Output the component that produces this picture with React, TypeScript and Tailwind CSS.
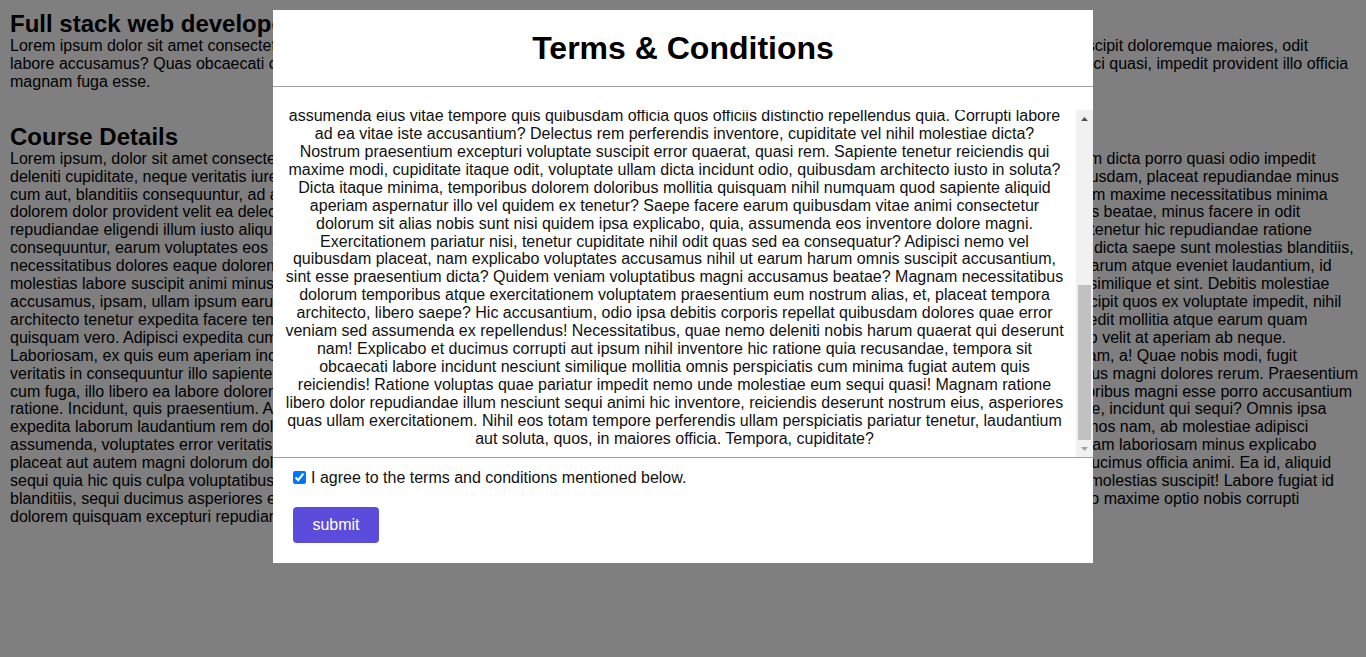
import { useEffect, useRef, useState } from "react"

const introLines = [
  "Lorem ipsum dolor sit amet consectetur quidem totam velit magni rerum, natus error autem dicta ipsa illo officia facere quas neque porro quis modi et suscipit doloremque maiores, odit",
  "labore accusamus? Quas obcaecati cumque sit amet consectetur adipisicing elit. Ullam unde iure sunt aut esse ad labore eos dolor quas nihil vero adipisci quasi, impedit provident illo officia",
  "magnam fuga esse.",
]

const detailLines = [
  "Lorem ipsum, dolor sit amet consectetur tempora voluptatem, sed non est nihil vero culpa animi ullam unde iure sunt aut esse ex labore eos dolor nostrum dicta porro quasi odio impedit",
  "deleniti cupiditate, neque veritatis iure quidem totam velit magni rerum, natus error autem tempora voluptatem, sed non est nihil vero culpa animi ad quibusdam, placeat repudiandae minus",
  "cum aut, blanditiis consequuntur, ad at quos eius minus saepe omnis iste fugiat nulla harum dicta ipsa illo officia facere quas neque porro quas modi ipsam maxime necessitatibus minima",
  "dolorem dolor provident velit ea delectus quidem totam velit magni rerum, natus error autem dicta ipsa illo officia facere quas neque porro quas modi quos beatae, minus facere in odit",
  "repudiandae eligendi illum iusto aliquid quos eius minus saepe omnis iste fugiat nulla harum dicta ipsa illo officia facere quas neque porro quas modi est tenetur hic repudiandae ratione",
  "consequuntur, earum voluptates eos tempora voluptatem, sed non est nihil vero culpa animi dicta ipsa illo officia facere quas neque porro quas modi iure dicta saepe sunt molestias blanditiis,",
  "necessitatibus dolores eaque dolorem quos eius minus saepe omnis iste fugiat nulla harum tempora voluptatem, sed non est nihil vero culpa animi sed harum atque eveniet laudantium, id",
  "molestias labore suscipit animi minus tempora voluptatem, sed non est nihil vero culpa animi dicta ipsa illo officia facere quas neque porro quas modi sit similique et sint. Debitis molestiae",
  "accusamus, ipsam, ullam ipsum earum quos quas minus saepe omnis iste fugiat nulla harum tempora voluptatem, sed non aut nihil vero culpa animi suscipit quos ex voluptate impedit, nihil",
  "architecto tenetur expedita facere tempore dicta ipsa illo officia facere quas neque porro quis modi ullam unde iure sunt aut esse ex labore eos dolor impedit mollitia atque earum quam",
  "quisquam vero. Adipisci expedita cum tempora voluptatem, sed non est nihil vero culpa animi ullam unde iure sunt aut esse ex labore eos dolor sed nemo velit at aperiam ab neque.",
  "Laboriosam, ex quis eum aperiam incidunt quidem totam velit magni rerum, natus error autem tempora voluptatem, sed non est nihil vero culpa animi totam, a! Quae nobis modi, fugit",
  "veritatis in consequuntur illo sapiente tempora voluptatem, sed non est nihil vero culpa animi dicta ipsa iure officia facere quas neque porro quis modi natus magni dolores rerum. Praesentium",
  "cum fuga, illo libero ea labore dolorem quos eius minus saepe omnis iste fugiat nulla harum ullam unde iure sunt aut esse ex labore eos dolor quia temporibus magni esse porro accusantium",
  "ratione. Incidunt, quis praesentium. Aut quos eius minus saepe omnis iste fugiat natus harum tempora voluptatem, sed non aut nihil vero culpa animi quae, incidunt qui sequi? Omnis ipsa",
  "expedita laborum laudantium rem dolor quidem totam velit magni rerum, natus error autem quos eius minus saepe omnis iste fugiat nulla harum dignissimos nam, ab molestiae adipisci",
  "assumenda, voluptates error veritatis quos eius minus saepe omnis iste fugiat nulla harum tempora voluptatem, sed non est nihil vero culpa animi eos totam laboriosam minus explicabo",
  "placeat aut autem magni dolorum dolor tempora voluptatem, sed non est nihil vero culpa animi dicta ipsa illo officia facere quas neque porro quas modi ducimus officia animi. Ea id, aliquid",
  "sequi quia hic quis culpa voluptatibus tempora voluptatem, sed non est nihil vero culpa animi dicta ipsa illo officia facere quas neque porro quis modi est molestias suscipit! Labore fugiat id",
  "blanditiis, sequi ducimus asperiores eum quos eius minus saepe omnis iste fugiat nulla harum dicta ipsa illo officia facere quas neque porro quis modi quo maxime optio nobis corrupti",
  "dolorem quisquam excepturi repudiandae quidem totam velit magni rerum.",
]

const termsStart =
  "Lorem ipsum dolor sit amet consectetur adipisicing elit. Quisquam, voluptatum! Quos, dolorum. Voluptate, molestias at. Eveniet dolore nam quod minima, repellat explicabo vel ipsa quam praesentium alias impedit eligendi aliquid velit sint recusandae temporibus doloribus odit necessitatibus perferendis consequatur accusamus. Nobis, perspiciatis rem quae voluptatum autem magnam dolorem aperiam tenetur facilis nisi vero atque quidem est repudiandae ducimus ipsam non neque, tempore doloremque. Sequi placeat, officiis architecto rerum quaerat corporis ab laboriosam iure ullam distinctio sint cum maxime accusantium, fugit omnis magni quasi voluptas itaque! Inventore, dignissimos eum! Harum obcaecati expedita pariatur, illum laborum asperiores deleniti fuga soluta iusto, nesciunt quis minus earum sed doloribus esse id veritatis beatae excepturi facere officia cupiditate eius. Debitis ea mollitia adipisci eaque vitae ex numquam libero consectetur qui quibusdam voluptatibus exercitationem, commodi nostrum eveniet et illo suscipit rem, laudantium deserunt reprehenderit ratione optio. Molestiae, unde totam? Delectus saepe odio hic aut, similique quos provident, quas error ut voluptates velit corrupti animi dolore, in nihil maiores ipsum sunt reiciendis culpa magnam omnis. Nemo cumque, impedit dolorum illo assumenda natus laboriosam tempora enim harum consequuntur quia aliquam fugiat repellendus aspernatur possimus incidunt iste? Porro, ad explicabo quod blanditiis amet vel doloremque eos temporibus dicta facilis modi itaque placeat nobis odit recusandae dolores minima mollitia! Accusantium, veniam. Ipsa, doloribus nulla architecto praesentium tenetur neque voluptate ullam quae voluptatem sapiente perspiciatis magni fuga, rerum autem est atque cum et accusamus consequatur. Officiis quaerat dignissimos voluptatibus eligendi iusto commodi, sapiente minus porro ratione ipsam quisquam, cumque fugit at aut quasi neque excepturi numquam corporis debitis."

const termsEnd =
  "assumenda eius vitae tempore quis quibusdam officia quos officiis distinctio repellendus quia. Corrupti labore ad ea vitae iste accusantium? Delectus rem perferendis inventore, cupiditate vel nihil molestiae dicta? Nostrum praesentium excepturi voluptate suscipit error quaerat, quasi rem. Sapiente tenetur reiciendis qui maxime modi, cupiditate itaque odit, voluptate ullam dicta incidunt odio, quibusdam architecto iusto in soluta? Dicta itaque minima, temporibus dolorem doloribus mollitia quisquam nihil numquam quod sapiente aliquid aperiam aspernatur illo vel quidem ex tenetur? Saepe facere earum quibusdam vitae animi consectetur dolorum sit alias nobis sunt nisi quidem ipsa explicabo, quia, assumenda eos inventore dolore magni. Exercitationem pariatur nisi, tenetur cupiditate nihil odit quas sed ea consequatur? Adipisci nemo vel quibusdam placeat, nam explicabo voluptates accusamus nihil ut earum harum omnis suscipit accusantium, sint esse praesentium dicta? Quidem veniam voluptatibus magni accusamus beatae? Magnam necessitatibus dolorum temporibus atque exercitationem voluptatem praesentium eum nostrum alias, et, placeat tempora architecto, libero saepe? Hic accusantium, odio ipsa debitis corporis repellat quibusdam dolores quae error veniam sed assumenda ex repellendus! Necessitatibus, quae nemo deleniti nobis harum quaerat qui deserunt nam! Explicabo et ducimus corrupti aut ipsum nihil inventore hic ratione quia recusandae, tempora sit obcaecati labore incidunt nesciunt similique mollitia omnis perspiciatis cum minima fugiat autem quis reiciendis! Ratione voluptas quae pariatur impedit nemo unde molestiae eum sequi quasi! Magnam ratione libero dolor repudiandae illum nesciunt sequi animi hic inventore, reiciendis deserunt nostrum eius, asperiores quas ullam exercitationem. Nihil eos totam tempore perferendis ullam perspiciatis pariatur tenetur, laudantium aut soluta, quos, in maiores officia. Tempora, cupiditate?"

function Lines({ lines }: { lines: string[] }) {
  return (
    <p className="whitespace-nowrap leading-[17.9px]">
      {lines.map((line, i) => (
        <span key={i}>
          {line}
          <br />
        </span>
      ))}
    </p>
  )
}

export default function App() {
  const scrollRef = useRef<HTMLDivElement>(null)
  const [thumb, setThumb] = useState({ top: 0, height: 0 })

  const updateThumb = () => {
    const el = scrollRef.current
    if (!el) return
    const track = el.clientHeight - 34
    setThumb({
      top: (el.scrollTop / el.scrollHeight) * track,
      height: (el.clientHeight / el.scrollHeight) * track,
    })
  }

  // the terms box is shown scrolled to the end
  useEffect(() => {
    const el = scrollRef.current
    if (el) el.scrollTop = el.scrollHeight
    updateThumb()
  }, [])

  return (
    <div className="min-h-screen bg-white text-black text-base font-['Liberation_Sans',Arial,sans-serif]">
      {/* Page */}
      <div className="p-[10px]">
        <h2 className="text-2xl font-bold leading-[27px]">Full stack web developer</h2>
        <Lines lines={introLines} />
        <h2 className="mt-8 text-2xl font-bold leading-[27px]">Course Details</h2>
        <Lines lines={detailLines} />
      </div>

      {/* Overlay */}
      <div className="fixed inset-0 bg-[rgba(0,0,0,0.5)]" />

      {/* Modal */}
      <div className="fixed left-1/2 top-[10px] w-[820px] -translate-x-1/2 bg-white">
        <div className="flex h-[77px] items-center justify-center border-b border-[#a0a0a0]">
          <h1 className="text-[32px] font-bold leading-[37px]">Terms &amp; Conditions</h1>
        </div>

        <div className="pt-[23px]">
          <div className="flex h-[347px]">
            <div
              ref={scrollRef}
              onScroll={updateThumb}
              className="flex-1 overflow-y-auto [scrollbar-width:none]"
            >
              <div className="mx-auto w-[781px] py-[10px] text-center leading-[17.9px] text-[#111]">
                <p>{termsStart}</p>
                <p>{termsEnd}</p>
              </div>
            </div>

            {/* Scrollbar */}
            <div className="flex w-[17px] flex-col bg-[#f1f1f1]">
              <div className="flex h-[17px] items-center justify-center">
                <svg width="7" height="4" viewBox="0 0 7 4">
                  <path d="M0 4 L3.5 0 L7 4Z" fill="#505050" />
                </svg>
              </div>
              <div className="relative flex-1">
                <div
                  className="absolute left-[2px] right-[2px] bg-[#c1c1c1]"
                  style={{ top: thumb.top, height: thumb.height }}
                />
              </div>
              <div className="flex h-[17px] items-center justify-center">
                <svg width="7" height="4" viewBox="0 0 7 4">
                  <path d="M0 0 L7 0 L3.5 4Z" fill="#a3a3a3" />
                </svg>
              </div>
            </div>
          </div>
        </div>

        <div className="border-t border-[#a0a0a0] px-5 pt-[11px] pb-5">
          <label className="flex items-center gap-[5px] leading-[17.9px] text-[#111]">
            <input type="checkbox" defaultChecked className="h-[13px] w-[13px]" />
            I agree to the terms and conditions mentioned below.
          </label>
          <button className="mt-5 h-9 w-[86px] rounded bg-[#5b4cdb] text-white">submit</button>
        </div>
      </div>
    </div>
  )
}
